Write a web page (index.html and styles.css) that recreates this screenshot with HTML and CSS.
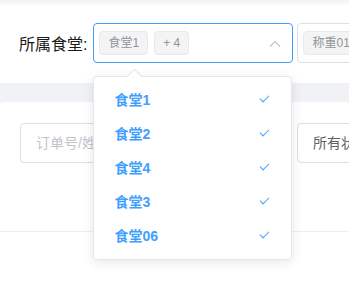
FILE: index.html
```html
<!DOCTYPE html>
<html lang="zh-CN">
<head>
    <meta charset="UTF-8">
    <meta name="viewport" content="width=device-width, initial-scale=1.0">
    <title>订单查询</title>
    <link rel="stylesheet" href="styles.css">
</head>
<body>
<div class="page">
    <div class="top-shade"></div>

    <!-- Filter row -->
    <div class="filter">
        <label class="filter-label">所属食堂:</label>
        <div class="select is-focus">
            <span class="tag">食堂1</span>
            <span class="tag">+ 4</span>
            <svg class="arrow" width="12" height="8" viewBox="0 0 12 8">
                <path d="M1 6.5 L6 1.5 L11 6.5" fill="none" stroke="#c0c4cc" stroke-width="1.2"/>
            </svg>

            <!-- Dropdown -->
            <div class="dropdown">
                <div class="popper-arrow"></div>
                <ul class="options">
                    <li class="option selected">食堂1<span class="check"></span></li>
                    <li class="option selected">食堂2<span class="check"></span></li>
                    <li class="option selected">食堂4<span class="check"></span></li>
                    <li class="option selected">食堂3<span class="check"></span></li>
                    <li class="option selected">食堂06<span class="check"></span></li>
                </ul>
            </div>
        </div>
        <div class="select">
            <span class="tag">称重01</span>
        </div>
    </div>

    <div class="band"></div>

    <!-- Search card -->
    <div class="card">
        <div class="input placeholder">订单号/姓名/手机号</div>
        <div class="input">所有状态</div>
    </div>
</div>
</body>
</html>
```

FILE: styles.css
```css
body {
    margin: 0;
    padding: 0;
    font-family: "Liberation Sans", "Noto Sans CJK SC", sans-serif;
    background-color: #fff;
}
.page {
    min-height: 100vh;
    overflow: hidden;
}
.top-shade {
    height: 6px;
    background: linear-gradient(#f2f2f2, #fff);
}
.filter {
    display: flex;
    align-items: center;
    padding: 17px 0 20px 19px;
    white-space: nowrap;
}
.filter-label {
    font-size: 16px;
    color: #1a1a1a;
    margin-right: 6px;
}
.select {
    position: relative;
    flex-shrink: 0;
    display: flex;
    align-items: center;
    box-sizing: border-box;
    width: 200px;
    height: 40px;
    border: 1px solid #dcdfe6;
    border-radius: 4px;
    padding-left: 5px;
    margin-right: 4px;
}
.select.is-focus {
    border-color: #409eff;
}
.tag {
    display: inline-block;
    box-sizing: border-box;
    height: 24px;
    line-height: 22px;
    padding: 0 8px;
    margin-right: 6px;
    font-size: 12px;
    color: #909399;
    background-color: #f4f4f5;
    border: 1px solid #e9e9eb;
    border-radius: 4px;
}
.arrow {
    position: absolute;
    right: 11px;
    top: 16px;
}
.dropdown {
    position: absolute;
    left: -1px;
    top: 52px;
    width: 199px;
    box-sizing: border-box;
    background-color: #fff;
    border: 1px solid #e4e7ed;
    border-radius: 4px;
    box-shadow: 0 2px 12px 0 rgba(0, 0, 0, 0.1);
    z-index: 10;
}
.popper-arrow {
    position: absolute;
    left: 35px;
    top: -6px;
    width: 10px;
    height: 10px;
    background-color: #fff;
    border-left: 1px solid #e4e7ed;
    border-top: 1px solid #e4e7ed;
    transform: rotate(45deg);
}
.options {
    list-style: none;
    margin: 0;
    padding: 6px 0;
    position: relative;
}
.option {
    position: relative;
    height: 34px;
    line-height: 34px;
    padding: 0 20px;
    font-size: 14px;
    color: #606266;
}
.option.selected {
    color: #409eff;
    font-weight: bold;
}
.check {
    position: absolute;
    right: 22px;
    top: 12px;
    width: 8px;
    height: 4px;
    border-left: 1.5px solid #409eff;
    border-bottom: 1.5px solid #409eff;
    transform: rotate(-45deg);
}
.band {
    height: 20px;
    background-color: #f0f2f5;
}
.card {
    display: flex;
    gap: 17px;
    height: 130px;
    box-sizing: border-box;
    padding: 21px 0 0 20px;
    background-color: #fff;
    border-radius: 4px 4px 0 0;
    border-bottom: 1px solid #ebeef5;
    margin-top: -1px;
    white-space: nowrap;
}
.input {
    flex-shrink: 0;
    box-sizing: border-box;
    width: 260px;
    height: 40px;
    line-height: 38px;
    padding: 0 15px;
    border: 1px solid #dcdfe6;
    border-radius: 4px;
    font-size: 14px;
    color: #606266;
}
.input.placeholder {
    color: #c0c4cc;
}
```
